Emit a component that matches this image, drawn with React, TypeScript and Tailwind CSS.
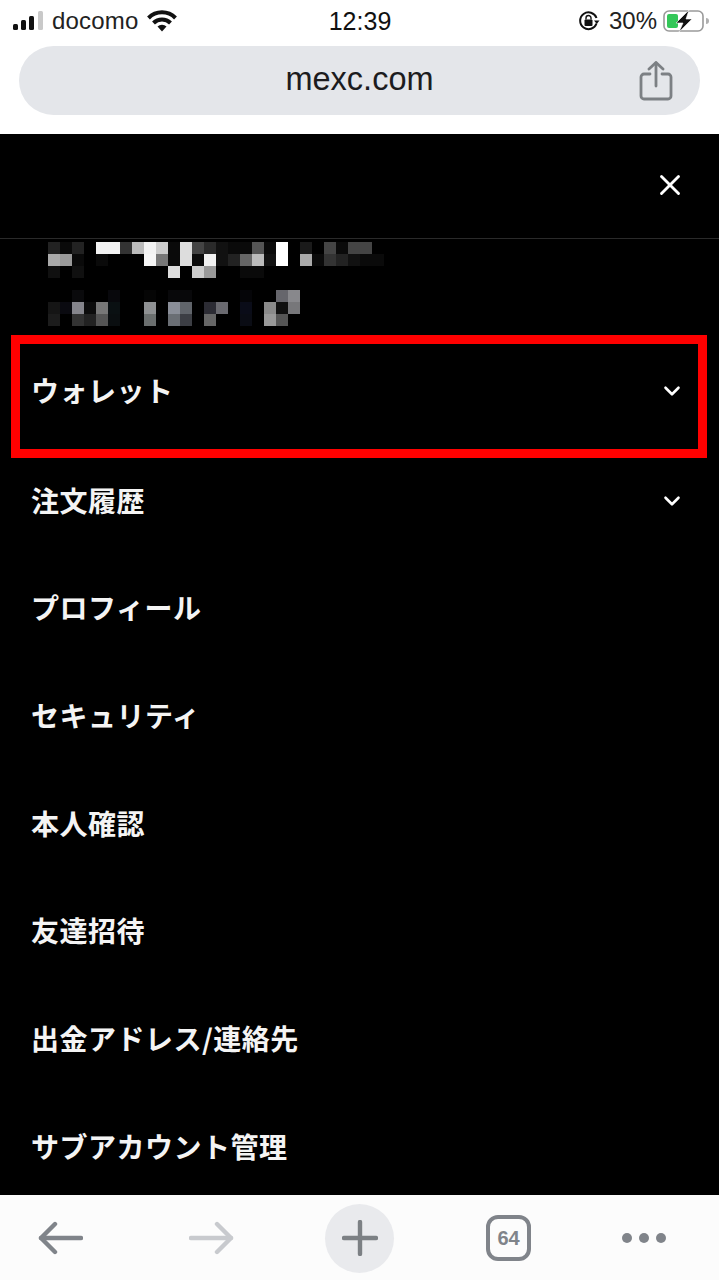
import React from "react";
import { X, ChevronDown } from "lucide-react";

const cell = 12;
const mosaicA: string[][] = [
  ["#222222","#0a0a0a","#222222","#000000","#f2f2f2","#f2f2f2","#333333","#bbbbbb","#f2f2f2","#cccccc","#0a0a0a","#dddddd","#444444","#2a2a2a","#111111","#0a0a0a","#0a0a0a","#555555","#0a0a0a","#ffffff","#000000","#1a1a1a","#000000","#444444","#0a0a0a","#444444","#444444"],
  ["#aaaaaa","#999999","#0a0a0a","#000000","#0a0a0a","#000000","#000000","#000000","#f5f5f5","#777777","#0a0a0a","#dddddd","#0c0c0c","#f2f2f2","#111111","#222222","#666666","#bbbbbb","#111111","#ffffff","#000000","#aaaaaa","#0a0a0a","#333333","#222222","#111111","#0a0a0a","#0a0a0a"],
  ["#101010","#000000","#101010","#000000","#000000","#000000","#000000","#000000","#000000","#000000","#dddddd","#000000","#cccccc","#999999","#000000","#000000","#0a0a0a","#0a0a0a","#000000","#000000","#000000","#000000","#000000","#000000","#000000","#000000","#000000","#000000"],
];
const mosaicB: string[][] = [
  ["#000000","#000000","#0a0a0c","#000000","#000000","#08080c","#000000","#000000","#050505","#000000","#08080a","#08080a","#000000","#000000","#000000","#000000","#050508","#000000","#000000","#66666c","#88888c"],
  ["#151515","#0a0a10","#85858c","#0c0c0c","#777777","#0a1012","#000000","#000000","#8e9092","#000000","#8a8e98","#60646a","#000000","#2c2c34","#6a6a70","#000000","#0a0c18","#000000","#8a8a8a","#101010","#77777a"],
  ["#1c1c1c","#000000","#333333","#222222","#555555","#0a0e10","#000000","#000000","#6a6e6e","#000000","#6a6e74","#3c3e44","#000000","#666666","#000000","#000000","#0a0c14","#000000","#999999","#555555","#000000"],
];

function Mosaic({ rows }: { rows: string[][] }) {
  const cols = Math.max(...rows.map((r) => r.length));
  return (
    <svg width={cols * cell} height={rows.length * cell} className="block">
      {rows.map((r, j) =>
        r.map((c, i) => <rect key={i} x={i * cell} y={j * cell} width={cell} height={cell} fill={c} />)
      )}
    </svg>
  );
}

const items = ["ウォレット", "注文履歴", "プロフィール", "セキュリティ", "本人確認", "友達招待", "出金アドレス/連絡先", "サブアカウント管理"];

function MenuRow({ label, chevron, first }: { label: string; chevron: boolean; first: boolean }) {
  return (
    <div className={`flex h-[107.7px] shrink-0 items-center justify-between pl-[31px] pr-[34px] ${first ? "mb-[2px]" : ""}`}>
      <span className="text-[28px] font-semibold leading-none tracking-[0.5px] text-[#f4f4f4]">{label}</span>
      {chevron && <ChevronDown size={26} strokeWidth={2.4} className="mt-[2px] text-white" />}
    </div>
  );
}

export default function App() {
  return (
    <div
      className="relative flex h-[1280px] w-[719px] flex-col overflow-hidden bg-white"
      style={{ fontFamily: '"Noto Sans CJK JP", "Liberation Sans", sans-serif' }}
    >
      {/* status bar */}
      <div className="flex h-[42px] shrink-0 items-center justify-between pl-[13px] pr-[10px] text-[#222]" style={{ fontFamily: '"Liberation Sans", sans-serif' }}>
        <div className="flex w-[240px] items-center">
          <svg width="30" height="20" viewBox="0 0 30 20">
            <rect x="0" y="13" width="5" height="6" rx="1.5" fill="#111" />
            <rect x="8" y="9" width="5" height="10" rx="1.5" fill="#111" />
            <rect x="16" y="5" width="5" height="14" rx="1.5" fill="#111" />
            <rect x="25" y="0" width="5" height="19" rx="1.5" fill="#c9c9c9" />
          </svg>
          <span className="ml-[9px] text-[24px] leading-none tracking-[0.2px]">docomo</span>
          <svg width="30" height="22" viewBox="0 0 30 22" className="ml-[8px]">
            <path d="M1.5 8 A19 19 0 0 1 28.5 8" fill="none" stroke="#111" strokeWidth="4" />
            <path d="M6.5 13 A12 12 0 0 1 23.5 13" fill="none" stroke="#111" strokeWidth="4" />
            <path d="M10.5 16.5 L15 21.5 L19.5 16.5 A6.5 6.5 0 0 0 10.5 16.5 Z" fill="#111" />
          </svg>
        </div>
        <span className="mr-[2px] text-[25px] font-medium leading-none text-[#111]">12:39</span>
        <div className="flex w-[240px] items-center justify-end">
          <svg width="22" height="22" viewBox="0 0 22 22">
            <path d="M18.5 13.5 A8.4 8.4 0 1 1 18.5 8" fill="none" stroke="#111" strokeWidth="2" />
            <path d="M16 10.5 L21.5 10.5 L18.8 14 Z" fill="#111" />
            <rect x="6.5" y="9.5" width="8" height="6.5" rx="1" fill="#111" />
            <path d="M8 9.5 V8 A2.5 2.5 0 0 1 13 8 V9.5" fill="none" stroke="#111" strokeWidth="1.4" />
          </svg>
          <span className="ml-[9px] text-[24px] leading-none">30%</span>
          <svg width="46" height="22" viewBox="0 0 46 22" className="ml-[6px]">
            <rect x="1" y="1" width="39" height="20" rx="5" fill="none" stroke="#9a9a9a" strokeWidth="1.6" />
            <rect x="4" y="4" width="11" height="14" rx="2" fill="#34c759" />
            <path d="M43 8 a3 3 0 0 1 0 6 Z" fill="#b0b0b0" />
            <path d="M26 0 L13 13 H20 L16 22 L29 9 H23 Z" fill="#111" stroke="#fff" strokeWidth="0.6" />
          </svg>
        </div>
      </div>

      {/* url bar */}
      <div className="flex h-[92px] shrink-0 px-[19px] pt-[4px]">
        <div className="relative flex h-[69px] w-full items-center justify-center rounded-full bg-[#e4e6ea]">
          <span className="mb-[2px] text-[32.5px] leading-none text-[#1c1c1e]" style={{ fontFamily: '"Liberation Sans", sans-serif' }}>mexc.com</span>
          <svg width="34" height="40" viewBox="0 0 34 40" fill="none" stroke="#7c8084" strokeWidth="2.8" strokeLinecap="round" strokeLinejoin="round" className="absolute right-[27px] top-[15px]">
            <path d="M11 13 H5 a3 3 0 0 0 -3 3 V35 a3 3 0 0 0 3 3 H29 a3 3 0 0 0 3 -3 V16 a3 3 0 0 0 -3 -3 H23" />
            <path d="M17 25 V2" />
            <path d="M10 8 L17 1.5 L24 8" />
          </svg>
        </div>
      </div>

      {/* drawer */}
      <div className="flex min-h-0 flex-1 flex-col overflow-hidden bg-black">
        <div className="flex h-[105px] shrink-0 items-center justify-end border-b border-b-[#2a2a2a] pr-[33px]">
          <X size={34} strokeWidth={2} className="mb-[3px] mr-[-1px] text-white" />
        </div>
        <div className="flex h-[97px] shrink-0 flex-col gap-[12px] pl-[48px] pt-[3px]">
          <Mosaic rows={mosaicA} />
          <Mosaic rows={mosaicB} />
        </div>
        {items.map((label, i) => (
          <MenuRow key={label} label={label} chevron={i < 2} first={i === 0} />
        ))}
      </div>

      {/* red highlight */}
      <div className="absolute left-[11px] top-[335px] h-[123px] w-[696px] border-[9px] border-[#ff0000]" />

      {/* bottom bar */}
      <div className="flex h-[85px] shrink-0 items-center bg-[#fcfcfc]">
        <div className="flex w-full items-center pt-[1px]">
          <div className="ml-[38px] flex w-[45px] justify-center">
            <svg width="45" height="34" viewBox="0 0 45 34" fill="none" stroke="#80848a" strokeWidth="4.4" strokeLinecap="round" strokeLinejoin="round">
              <path d="M43 17 H3" />
              <path d="M17 3 L3 17 L17 31" />
            </svg>
          </div>
          <div className="ml-[106px] flex w-[45px] justify-center">
            <svg width="45" height="34" viewBox="0 0 45 34" fill="none" stroke="#c8cace" strokeWidth="4.4" strokeLinecap="round" strokeLinejoin="round">
              <path d="M2 17 H42" />
              <path d="M28 3 L42 17 L28 31" />
            </svg>
          </div>
          <div className="ml-[91px] flex h-[69px] w-[69px] items-center justify-center rounded-full bg-[#e9eaed]">
            <svg width="36" height="36" viewBox="0 0 36 36" fill="none" stroke="#7c8084" strokeWidth="4.4" strokeLinecap="round">
              <path d="M18 2 V34" />
              <path d="M2 18 H34" />
            </svg>
          </div>
          <div className="ml-[92px] flex h-[46px] w-[45px] items-center justify-center rounded-[12px] border-[4px] border-[#80848a]">
            <span className="text-[20px] font-bold leading-none text-[#80848a]" style={{ fontFamily: '"Liberation Sans", sans-serif' }}>64</span>
          </div>
          <div className="ml-[91px] flex items-center gap-[7px]">
            <span className="h-[10px] w-[10px] rounded-full bg-[#80848a]" />
            <span className="h-[10px] w-[10px] rounded-full bg-[#80848a]" />
            <span className="h-[10px] w-[10px] rounded-full bg-[#80848a]" />
          </div>
        </div>
      </div>
    </div>
  );
}
